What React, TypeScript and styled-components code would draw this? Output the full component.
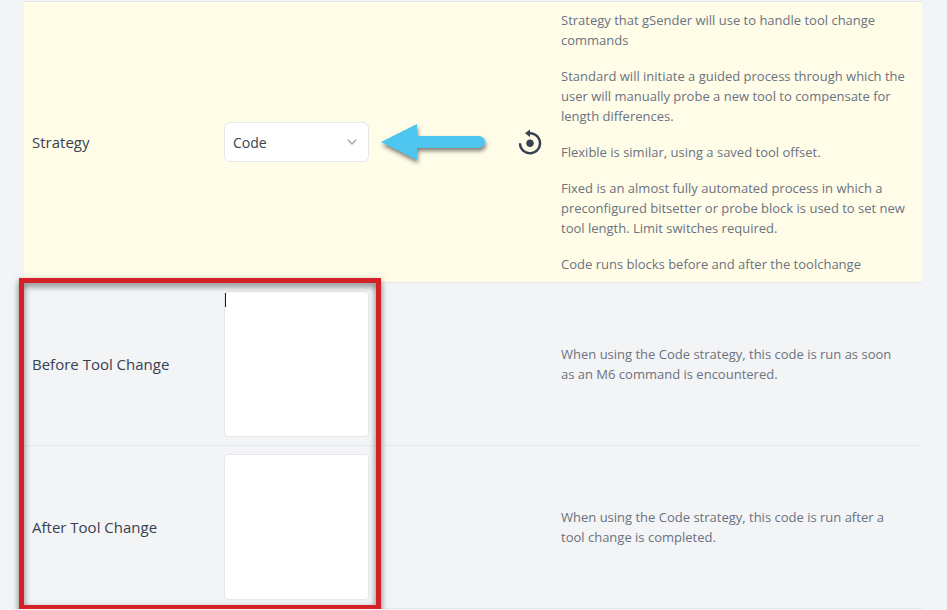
import React from "react";
import styled, { createGlobalStyle } from "styled-components";
import { BiReset } from "react-icons/bi";
import { ChevronDown } from "lucide-react";

const GlobalStyle = createGlobalStyle`
  *, *::before, *::after { box-sizing: border-box; }
  body {
    margin: 0;
    background: #f3f4f6;
    color: #374151;
    font-family: "Segoe UI", "Open Sans", "Noto Sans", sans-serif;
  }
`;

const Page = styled.main`
  padding: 1px 25px 0 24px;
`;

const SettingRow = styled.section<{ $changed?: boolean }>`
  display: grid;
  grid-template-columns: minmax(0, 192fr) minmax(0, 145fr) minmax(0, 192fr) minmax(0, 353fr);
  align-items: center;
  padding: 8px;
  border-bottom: 1px solid #e5e7eb;
  background: ${(p) => (p.$changed ? "#fffde8" : "transparent")};
`;

const SettingList = styled.div`
  border-top: 1px solid #e0e4e6;
`;

const HighlightedGroup = styled.div`
  position: relative;
`;

const HighlightFrame = styled.div`
  position: absolute;
  top: -5px;
  bottom: -1px;
  left: -5px;
  width: calc(40% + 3px);
  border: 5px solid #d42027;
  filter: drop-shadow(0 3px 3px rgba(0, 0, 0, 0.55));
  pointer-events: none;
`;

const Label = styled.label`
  font-size: 15px;
  line-height: 24px;
`;

const Control = styled.div`
  position: relative;
  display: flex;
`;

const Select = styled.select`
  appearance: none;
  width: 100%;
  height: 40px;
  padding: 0 32px 0 8px;
  border: 1px solid #e5e7eb;
  border-radius: 6px;
  background: #fff;
  color: #374151;
  font: inherit;
  font-size: 14px;
`;

const SelectChevron = styled(ChevronDown)`
  position: absolute;
  top: 12px;
  right: 9px;
  color: #9ca3af;
  pointer-events: none;
`;

const CodeArea = styled.textarea`
  width: 100%;
  height: 146px;
  padding: 0;
  border: 1px solid #e5e7eb;
  border-radius: 4px;
  outline: none;
  resize: none;
  background: #fff;
  color: #111827;
  font: inherit;
  font-size: 14px;
`;

const Caret = styled.span`
  position: absolute;
  top: 2px;
  left: 1px;
  width: 1px;
  height: 14px;
  background: #111827;
`;

const PointerArrow = styled.svg`
  position: absolute;
  top: 0;
  left: calc(100% + 11px);
  overflow: visible;
  filter: drop-shadow(1px 3px 2px rgba(0, 0, 0, 0.5));
  pointer-events: none;
`;

const Actions = styled.div`
  display: flex;
  justify-content: flex-end;
  padding-right: 16px;
`;

const ResetButton = styled.button`
  display: flex;
  padding: 0;
  border: 0;
  background: none;
  color: #374151;
  cursor: pointer;
`;

const Description = styled.div`
  display: flex;
  flex-direction: column;
  grid-column: 4;
  gap: 16px;
  padding-right: 8px;
  color: #6b7280;
  font-size: 13px;
  line-height: 20px;
`;

const Paragraph = styled.p`
  margin: 0;
`;

const strategyNotes = [
  "Strategy that gSender will use to handle tool change commands",
  "Standard will initiate a guided process through which the user will manually probe a new tool to compensate for length differences.",
  "Flexible is similar, using a saved tool offset.",
  "Fixed is an almost fully automated process in which a preconfigured bitsetter or probe block is used to set new tool length. Limit switches required.",
  "Code runs blocks before and after the toolchange",
];

export default function App() {
  return (
    <>
      <GlobalStyle />
      <Page>
        <SettingList>
          <SettingRow $changed>
            <Label htmlFor="strategy">Strategy</Label>
            <Control>
              <Select id="strategy" defaultValue="Code">
                <option>Standard</option>
                <option>Flexible</option>
                <option>Fixed</option>
                <option>Code</option>
              </Select>
              <SelectChevron size={16} strokeWidth={2} aria-hidden />
              <PointerArrow width="106" height="40" viewBox="0 0 106 40" aria-hidden>
                <path
                  d="M1 20 37 2V14H99a6 6 0 0 1 0 12H37V38Z"
                  fill="#4fc6ef"
                />
              </PointerArrow>
            </Control>
            <Actions>
              <ResetButton type="button" aria-label="Reset strategy">
                <BiReset size={30} />
              </ResetButton>
            </Actions>
            <Description>
              {strategyNotes.map((note) => (
                <Paragraph key={note}>{note}</Paragraph>
              ))}
            </Description>
          </SettingRow>
          <HighlightedGroup>
            <SettingRow>
              <Label htmlFor="before">Before Tool Change</Label>
              <Control>
                <CodeArea id="before" />
                <Caret />
              </Control>
              <Description>
                <Paragraph>
                  When using the Code strategy, this code is run as soon as an M6 command is
                  encountered.
                </Paragraph>
              </Description>
            </SettingRow>
            <SettingRow>
              <Label htmlFor="after">After Tool Change</Label>
              <Control>
                <CodeArea id="after" />
              </Control>
              <Description>
                <Paragraph>
                  When using the Code strategy, this code is run after a tool change is completed.
                </Paragraph>
              </Description>
            </SettingRow>
            <HighlightFrame />
          </HighlightedGroup>
        </SettingList>
      </Page>
    </>
  );
}
